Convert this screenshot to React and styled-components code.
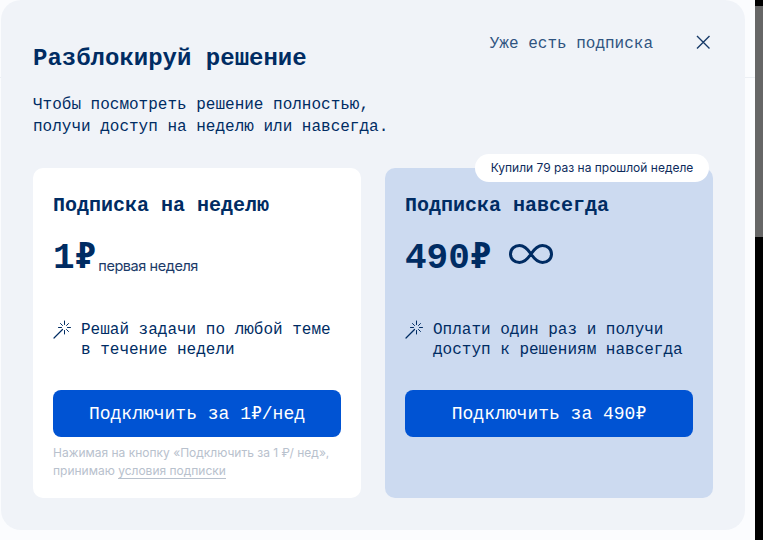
import React from 'react'
import styled, { createGlobalStyle } from 'styled-components'

const MONO = '"Liberation Mono", "DejaVu Sans Mono", monospace'
const SANS = 'Inter, "Noto Sans", sans-serif'
const NAVY = '#002c63'

const GlobalStyle = createGlobalStyle`
  html, body {
    margin: 0;
    padding: 0;
    height: 100%;
    overflow: hidden;
    background: #fbfcfe;
  }
  * { box-sizing: border-box; }
`

const Page = styled.div`
  display: flex;
  width: 763px;
  height: 540px;
`

const Backdrop = styled.div`
  flex: 1;
  padding-left: 1px;
  background: linear-gradient(#eceff4, #eceff4) 0 77px / 100% 1px no-repeat;
`

const Scrollbar = styled.div`
  display: flex;
  flex-direction: column;
  width: 8px;
  padding-top: 6px;
  background: #000;
`

const ScrollThumb = styled.div`
  height: 231px;
  background: #666;
`

const Modal = styled.div`
  width: 744px;
  height: 530px;
  padding: 0 32px;
  border-radius: 20px;
  background: #f0f3f8;
  color: ${NAVY};
  font-family: ${MONO};
`

const Header = styled.div`
  display: flex;
  justify-content: space-between;
  height: 168px;
`

const Title = styled.h2`
  margin: 45px 0 0;
  font-size: 24px;
  line-height: 28px;
  font-weight: 700;
`

const Lead = styled.p`
  margin: 21px 0 0;
  font-size: 16px;
  line-height: 22px;
`

const HeaderActions = styled.div`
  display: flex;
  align-items: center;
  align-self: flex-start;
  gap: 42px;
  margin: 34px 2px 0 0;
  height: 20px;
`

const LoginLink = styled.span`
  font-size: 16px;
  line-height: 20px;
  color: #2f5480;
`

const Plans = styled.div`
  display: grid;
  grid-template-columns: 328px 328px;
  gap: 24px;
`

const Card = styled.div`
  position: relative;
  display: flex;
  flex-direction: column;
  height: 330px;
  padding: 27px 20px 0;
  border-radius: 10px;
  background: ${(p) => (p.$accent ? '#ccdaf0' : '#fff')};
`

const Badge = styled.div`
  position: absolute;
  top: -14px;
  right: 4px;
  width: 234px;
  height: 28px;
  border-radius: 14px;
  background: #fff;
  color: #0d2b5c;
  font-family: ${SANS};
  font-size: 12px;
  line-height: 28px;
  text-align: center;
`

const PlanName = styled.h3`
  margin: 0;
  font-size: 20px;
  line-height: 22px;
  font-weight: 700;
`

const PriceRow = styled.div`
  display: flex;
  align-items: flex-end;
  height: 40px;
  margin-top: 22px;
`

const Price = styled.span`
  font-size: 36px;
  line-height: 40px;
  font-weight: 700;
`

const PriceNote = styled.span`
  margin: 0 0 3px 2px;
  font-family: ${SANS};
  font-size: 14.5px;
  line-height: 20px;
  letter-spacing: -0.43px;
  color: #1b3a68;
`

const InfinityIcon = styled.svg`
  align-self: flex-start;
  width: 46px;
  height: 24px;
  margin: 3px 0 0 17px;
`

const Feature = styled.div`
  display: flex;
  gap: 9px;
  margin-top: 41px;
  height: 70px;
  font-size: 16px;
  line-height: 20px;
`

const WandIcon = styled.svg`
  flex: none;
  width: 19px;
  height: 19px;
`

const ActionButton = styled.button`
  flex: none;
  height: 47px;
  border: 0;
  border-radius: 8px;
  background: #0053d3;
  color: #fff;
  font-family: ${MONO};
  font-size: 18px;
  line-height: 47px;
  text-align: center;
`

const Legal = styled.p`
  margin: 7px 0 0;
  font-family: ${SANS};
  font-size: 12px;
  line-height: 18px;
  color: #b8c1cd;
`

const LegalLink = styled.span`
  border-bottom: 1px solid #b8c1cd;
`

const CloseIcon = styled.svg`
  width: 16px;
  height: 16px;
  margin-top: -4px;
`

const Wand = () => (
  <WandIcon viewBox="0 0 19 19" fill="none" stroke={NAVY} strokeWidth="1" strokeLinecap="round">
    <path d="M1 18 9.500 9.500" strokeWidth="1.200" />
    <path d="M11.500 1v3.500M11.500 10.500v3.500M17.500 7.500H14.500M8.500 7.500H5.500M15.500 3.500l-2 2M7.500 3.500l2 2M15.500 11.500l-2-2" />
  </WandIcon>
)

const plans = [
  {
    name: 'Подписка на неделю',
    price: '1₽',
    note: 'первая неделя',
    feature: ['Решай задачи по любой теме', 'в течение недели'],
    action: 'Подключить за 1₽/нед',
    legal: true,
  },
  {
    name: 'Подписка навсегда',
    price: '490₽',
    forever: true,
    accent: true,
    badge: 'Купили 79 раз на прошлой неделе',
    feature: ['Оплати один раз и получи', 'доступ к решениям навсегда'],
    action: 'Подключить за 490₽',
  },
]

const App = () => (
  <Page>
    <GlobalStyle />
    <Backdrop>
      <Modal>
        <Header>
          <div>
            <Title>Разблокируй решение</Title>
            <Lead>
              Чтобы посмотреть решение полностью,
              <br />
              получи доступ на неделю или навсегда.
            </Lead>
          </div>
          <HeaderActions>
            <LoginLink>Уже есть подписка</LoginLink>
            <CloseIcon viewBox="0 0 16 16" fill="none" stroke="#173a68" strokeWidth="1.4">
              <path d="M2 2l12.500 12.500M14.500 2 2 14.500" />
            </CloseIcon>
          </HeaderActions>
        </Header>
        <Plans>
          {plans.map((plan) => (
            <Card key={plan.name} $accent={plan.accent}>
              {plan.badge && <Badge>{plan.badge}</Badge>}
              <PlanName>{plan.name}</PlanName>
              <PriceRow>
                <Price>{plan.price}</Price>
                {plan.note && <PriceNote>{plan.note}</PriceNote>}
                {plan.forever && (
                  <InfinityIcon viewBox="0 0 46 24" fill="none" stroke={NAVY} strokeWidth="3">
                    <path d="M23 12C19 6 15.500 3.500 11.500 3.500 6.500 3.500 2.500 7 2.500 12s4 8.500 9 8.500c4 0 7.500-2.500 11.500-8.500 4-6 7.500-8.500 11.500-8.500 5 0 9 3.500 9 8.500s-4 8.500-9 8.500c-4 0-7.500-2.500-11.500-8.500Z" />
                  </InfinityIcon>
                )}
              </PriceRow>
              <Feature>
                <Wand />
                <div>
                  {plan.feature[0]}
                  <br />
                  {plan.feature[1]}
                </div>
              </Feature>
              <ActionButton type="button">{plan.action}</ActionButton>
              {plan.legal && (
                <Legal>
                  Нажимая на кнопку «Подключить за 1 ₽/ нед»,
                  <br />
                  принимаю <LegalLink>условия подписки</LegalLink>
                </Legal>
              )}
            </Card>
          ))}
        </Plans>
      </Modal>
    </Backdrop>
    <Scrollbar>
      <ScrollThumb />
    </Scrollbar>
  </Page>
)

export default App
